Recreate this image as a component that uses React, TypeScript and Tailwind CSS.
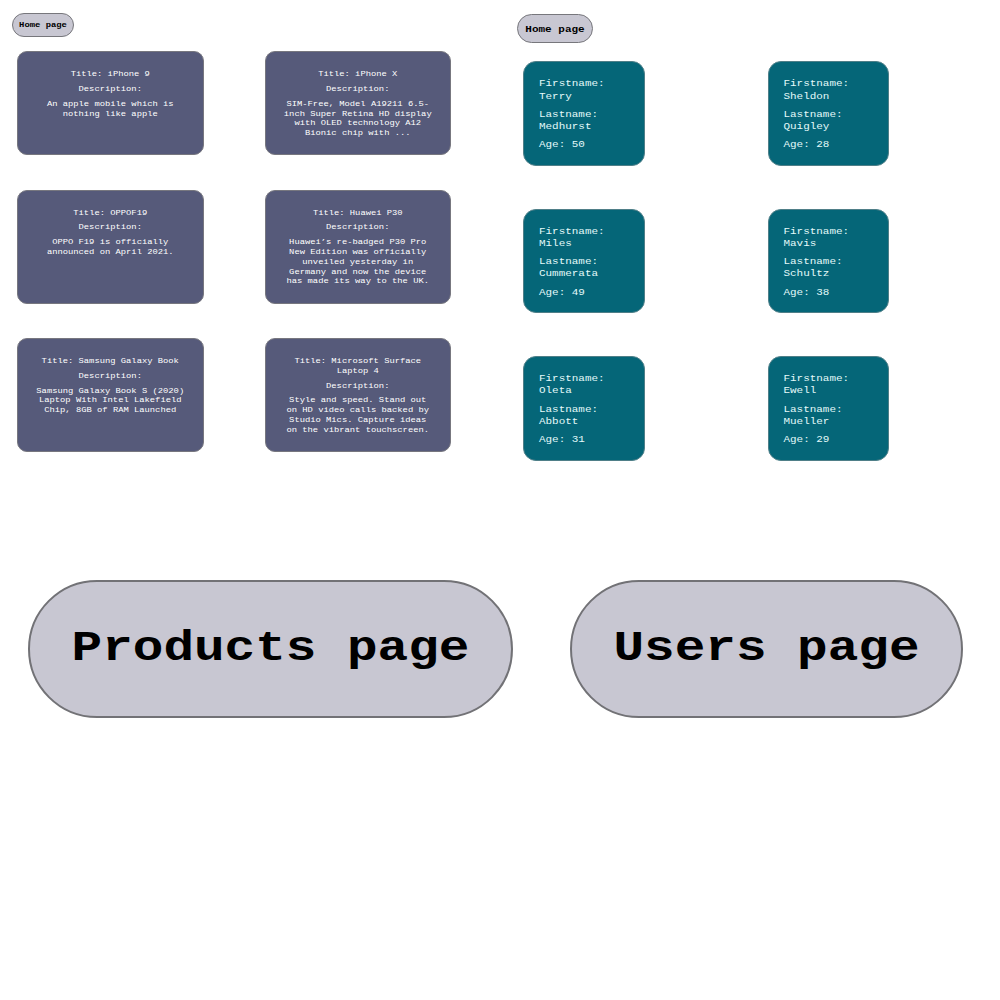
const products = [
  { title: ["Title: iPhone 9"], description: ["An apple mobile which is", "nothing like apple"] },
  {
    title: ["Title: iPhone X"],
    description: ["SIM-Free, Model A19211 6.5-", "inch Super Retina HD display", "with OLED technology A12", "Bionic chip with ..."],
  },
  { title: ["Title: OPPOF19"], description: ["OPPO F19 is officially", "announced on April 2021."] },
  {
    title: ["Title: Huawei P30"],
    description: ["Huawei’s re-badged P30 Pro", "New Edition was officially", "unveiled yesterday in", "Germany and now the device", "has made its way to the UK."],
  },
  {
    title: ["Title: Samsung Galaxy Book"],
    description: ["Samsung Galaxy Book S (2020)", "Laptop With Intel Lakefield", "Chip, 8GB of RAM Launched"],
  },
  {
    title: ["Title: Microsoft Surface", "Laptop 4"],
    description: ["Style and speed. Stand out", "on HD video calls backed by", "Studio Mics. Capture ideas", "on the vibrant touchscreen."],
  },
];

const users = [
  { first: "Terry", last: "Medhurst", age: 50 },
  { first: "Sheldon", last: "Quigley", age: 28 },
  { first: "Miles", last: "Cummerata", age: 49 },
  { first: "Mavis", last: "Schultz", age: 38 },
  { first: "Oleta", last: "Abbott", age: 31 },
  { first: "Ewell", last: "Mueller", age: 29 },
];

function Lines({ lines }: { lines: string[] }) {
  return (
    <p>
      {lines.map((line) => (
        <span key={line} className="block scale-y-[.88] whitespace-nowrap">
          {line}
        </span>
      ))}
    </p>
  );
}

function ProductsPanel() {
  return (
    <section className="w-[500px] pl-3 pt-[12.6px]">
      <button className="flex h-[24.4px] w-[62px] items-center justify-center rounded-full border border-[#77777c] bg-[#c8c7d2] pt-px text-[8.85px] font-bold whitespace-nowrap text-black">
        <span className="scale-y-[.88]">Home page</span>
      </button>
      <div className="mt-[14.4px] ml-[5px] grid grid-cols-[186.5px_186.5px] grid-rows-[104px_114px_114px] gap-x-[61px] gap-y-[34.4px]">
        {products.map((product) => (
          <article
            key={product.title[0]}
            className="flex flex-col gap-[5px] rounded-[10px] border border-[#77777f] bg-[#565a7a] pt-[17.8px] text-center text-[8.8px] leading-[9.8px] text-white"
          >
            <Lines lines={product.title} />
            <Lines lines={["Description:"]} />
            <Lines lines={product.description} />
          </article>
        ))}
      </div>
    </section>
  );
}

function UsersPanel() {
  return (
    <section className="w-[500px] pl-[17px] pt-[14px]">
      <button className="flex h-[29px] w-[76px] items-center justify-center rounded-full border border-[#77777c] bg-[#c8c7d2] pt-px text-[11px] font-bold whitespace-nowrap text-black">
        <span className="scale-y-[.85]">Home page</span>
      </button>
      <div className="mt-[18.4px] ml-[6.3px] grid grid-cols-[121.5px_121.5px] grid-rows-[104.5px_104.5px_104.5px] gap-x-[123px] gap-y-[42.9px]">
        {users.map((user) => (
          <article
            key={user.first}
            className="flex flex-col gap-[6.1px] rounded-[13px] border border-[#4f7f88] bg-[#056678] pt-[15px] pl-[14.7px] text-[10.95px] leading-[12.2px] text-[#e4fafa]"
          >
            <Lines lines={["Firstname:", user.first]} />
            <Lines lines={["Lastname:", user.last]} />
            <Lines lines={[`Age: ${user.age}`]} />
          </article>
        ))}
      </div>
    </section>
  );
}

export default function App() {
  return (
    <main className="h-[1000px] w-[1000px] overflow-hidden bg-white font-['Courier_New','Liberation_Mono',monospace]">
      <div className="flex h-[580px]">
        <ProductsPanel />
        <UsersPanel />
      </div>
      <nav className="flex gap-[57px] pl-7 text-[51px] font-bold text-black">
        <button className="flex h-[138px] w-[485px] items-center justify-center rounded-full border-2 border-[#727276] bg-[#c8c7d2] whitespace-nowrap">
          <span className="scale-y-[.82]">Products page</span>
        </button>
        <button className="flex h-[138px] w-[393px] items-center justify-center rounded-full border-2 border-[#727276] bg-[#c8c7d2] whitespace-nowrap">
          <span className="scale-y-[.82]">Users page</span>
        </button>
      </nav>
    </main>
  );
}
